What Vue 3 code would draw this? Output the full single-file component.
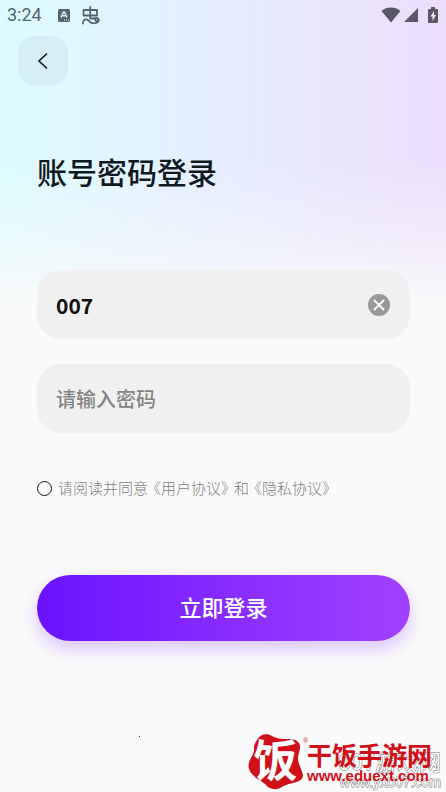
<script setup>
import { ref } from 'vue'

const account = ref('007')
const password = ref('')
const agreed = ref(false)
</script>

<template>
  <div class="screen">
    <header class="status">
      <span class="clock">3:24</span>
      <svg class="ic-app" viewBox="0 0 12 13" aria-hidden="true">
        <rect width="12" height="13" rx="1.500" fill="#55666b" />
        <path d="M3 8.500 5.500 3h1L9 8.500M4.200 6.700h3.600" fill="none" stroke="#e3f6fc" stroke-width="1.500" />
        <path d="M6 11h1M8 11h1M10 11h1" stroke="#e3f6fc" stroke-width="1" />
      </svg>
      <svg class="ic-worm" viewBox="0 0 18 19" aria-hidden="true">
        <g fill="none" stroke="#55666b" stroke-width="1.800" stroke-linecap="round" stroke-linejoin="round">
          <path d="M1.500 4h13.500v5.500H1.500zM8.200 1v11.500M8.200 12.500h5" />
          <path d="M1 17.500c0-3 1.500-4.200 3-4.200 3.500 0 3 4 7.500 4 3.500 0 5.500-1.500 5.500-4" />
          <circle cx="14.500" cy="13.500" r="1.500" />
        </g>
      </svg>
      <span class="grow"></span>
      <svg class="ic-wifi" viewBox="0 0 20 16" aria-hidden="true">
        <path d="M.5 4C5.500-.6 14.500-.6 19.500 4L10 15.500z" fill="#5b5768" />
      </svg>
      <svg class="ic-signal" viewBox="0 0 14 14" aria-hidden="true">
        <path d="M14 0v14H0z" fill="#5b5768" />
      </svg>
      <svg class="ic-battery" viewBox="0 0 10 16" aria-hidden="true">
        <path d="M3 0h4v2h2q1 0 1 1v12q0 1-1 1H1q-1 0-1-1V3q0-1 1-1h2z" fill="#5b5768" />
        <path d="M6 4 2.500 9.500h2V14L8 8H6z" fill="#f3eafe" />
      </svg>
    </header>

    <nav class="nav">
      <button class="back" type="button" aria-label="返回">
        <svg viewBox="0 0 12 18" aria-hidden="true">
          <path d="M10 1.500 2 9l8 7.500" fill="none" stroke="#152126" stroke-width="1.700" />
        </svg>
      </button>
    </nav>

    <form class="form" @submit.prevent>
      <h1>账号密码登录</h1>
      <div class="field">
        <input v-model="account" type="text" aria-label="账号" autocomplete="off" />
        <button class="clear" type="button" aria-label="清除" @click="account = ''">
          <svg viewBox="0 0 22 22" aria-hidden="true">
            <circle cx="11" cy="11" r="11" fill="#999" />
            <path d="m6.500 6.500 9 9m0-9-9 9" stroke="#fff" stroke-width="1.800" stroke-linecap="round" />
          </svg>
        </button>
      </div>
      <div class="field">
        <input v-model="password" type="password" aria-label="密码" placeholder="请输入密码" />
      </div>
      <div class="agree">
        <input id="agree" v-model="agreed" type="checkbox" />
        <label for="agree">请阅读并同意<a href="#terms">《用户协议》</a>和<a href="#privacy">《隐私协议》</a></label>
      </div>
      <button class="submit" type="submit">立即登录</button>
    </form>

    <footer class="foot">
      <i class="dot"></i>
      <div class="ghost">
        <span class="ghost-name">007游戏网</span>
        <span class="ghost-url">www.yx007.com</span>
      </div>
      <div class="brand">
        <div class="mark">
          <svg viewBox="0 0 55 56" aria-hidden="true">
            <path d="M9 6C12 0 19-1 24 2c4 2 7 3 12 3 8 0 12 0 15 4 3 5-1 10-1 15 0 7 4 11 5 17 0 5-5 7-10 8-6 1-9 3-13 5-6 3-12 0-15-4-4-4-9-5-13-10-5-6-4-11-1-16 3-6 3-6 3-10 0-3 1-5 3-8z" fill="#d0111b" />
          </svg>
          <span class="glyph">饭</span>
        </div>
        <span class="reg">®</span>
        <div class="words">
          <span class="name">干饭手游网</span>
          <span class="url">www.eduext.com</span>
        </div>
      </div>
    </footer>
  </div>
</template>

<style>
body {
  margin: 0;
  background: #fafafa;
}
</style>

<style scoped>
.screen {
  box-sizing: border-box;
  display: flex;
  flex-direction: column;
  min-height: 100vh;
  overflow: hidden;
  font-family: "Noto Sans CJK SC", sans-serif;
  color: #101820;
  background:
    linear-gradient(180deg, rgba(250, 250, 250, 0) 160px, rgba(250, 250, 250, 0.45) 240px, #fafafa 310px),
    linear-gradient(90deg, #dcfcff 0%, #e2f3ff 30%, #e6ebff 58%, #e9e4fc 78%, #ecdffb 100%);
}
button {
  border: 0;
  padding: 0;
  font: inherit;
  cursor: pointer;
}
svg {
  display: block;
}
.status {
  display: flex;
  align-items: center;
  height: 30px;
  padding: 0 8px 0 7px;
}
.clock {
  font: 400 18px/30px Roboto, sans-serif;
  color: #55666b;
}
.ic-app {
  width: 12px;
  height: 13px;
  margin-left: 16px;
}
.ic-worm {
  width: 18px;
  height: 19px;
  margin-left: 12px;
}
.grow {
  flex: 1;
}
.ic-wifi {
  width: 20px;
  height: 16px;
}
.ic-signal {
  width: 14px;
  height: 14px;
  margin: 0 10px 0 3px;
}
.ic-battery {
  width: 10px;
  height: 16px;
}
.nav {
  padding: 6px 18px 0;
}
.back {
  display: grid;
  place-items: center;
  width: 50px;
  height: 49px;
  border-radius: 17px;
  background: rgba(160, 170, 170, 0.13);
}
.back svg {
  width: 12px;
  height: 18px;
}
.form {
  display: flex;
  flex-direction: column;
  padding: 63px 36px 0 37px;
}
h1 {
  margin: 0 0 76px;
  font-size: 30px;
  line-height: 46px;
  font-weight: 500;
}
.field {
  display: flex;
  align-items: center;
  height: 69px;
  margin-bottom: 25px;
  padding: 0 20px 0 19px;
  border-radius: 24px;
  background: #f0f0f0;
}
.field input {
  flex: 1;
  min-width: 0;
  padding: 0;
  border: 0;
  outline: 0;
  background: none;
  font: 500 20px/30px "Noto Sans CJK SC", sans-serif;
  color: #101010;
}
.field input[type="text"] {
  font-size: 21px;
  font-weight: 700;
}
.field input::placeholder {
  color: #858585;
  opacity: 1;
}
.clear {
  background: none;
}
.clear svg {
  width: 22px;
  height: 22px;
}
.agree {
  display: flex;
  align-items: center;
  gap: 6px;
  height: 24px;
  margin: 18px 0 75px;
}
.agree input {
  appearance: none;
  box-sizing: border-box;
  width: 15px;
  height: 15px;
  margin: 0;
  border: 1px solid #111;
  border-radius: 50%;
}
.agree input:checked {
  background: #7a1bff;
}
.agree label {
  font-size: 15px;
  line-height: 24px;
  font-weight: 300;
  color: #808080;
  white-space: nowrap;
}
.agree a {
  margin: 0 -2px;
  color: inherit;
  text-decoration: none;
}
.submit {
  height: 66px;
  padding-bottom: 4px;
  border-radius: 33px;
  font-size: 22px;
  font-weight: 500;
  color: #fff;
  background: linear-gradient(90deg, #6a12ff, #8a2eff 55%, #a141ff);
  box-shadow: 0 8px 18px rgba(138, 60, 255, 0.28);
}
.foot {
  position: relative;
  display: flex;
  justify-content: space-between;
  margin-top: auto;
  padding: 0 14px 2px 139px;
}
.dot {
  width: 1px;
  height: 1px;
  margin-top: 2px;
  background: #5a3a6a;
}
.brand {
  position: relative;
  display: flex;
}
.mark {
  display: grid;
  width: 55px;
  height: 56px;
}
.mark svg,
.glyph {
  grid-area: 1 / 1;
}
.glyph {
  font-size: 44px;
  line-height: 48px;
  font-weight: 700;
  text-align: center;
  color: #fff;
}
.reg {
  width: 4px;
  font: 7px/14px "Liberation Sans", sans-serif;
  color: #b03a40;
}
.words {
  display: flex;
  flex-direction: column;
  padding-top: 6px;
  white-space: nowrap;
  color: #d0111b;
}
.name {
  font-size: 25px;
  line-height: 28px;
  font-weight: 700;
}
.url {
  font: 700 15px/16px "Liberation Sans", sans-serif;
}
.ghost {
  position: absolute;
  right: 5px;
  bottom: 2px;
  display: flex;
  flex-direction: column;
  align-items: flex-end;
  color: #fff;
  -webkit-text-stroke: 1px #707070;
  paint-order: stroke fill;
}
.ghost-name {
  font-size: 22px;
  line-height: 28px;
}
.ghost-url {
  font: 14px/16px "Liberation Sans", sans-serif;
}
</style>
